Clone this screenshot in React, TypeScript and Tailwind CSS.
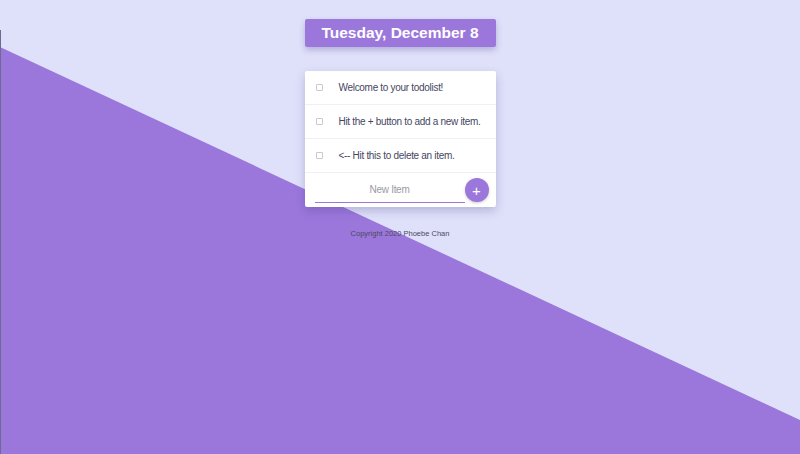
import { useState } from 'react';

const items = [
    'Welcome to your todolist!',
    'Hit the + button to add a new item.',
    '<-- Hit this to delete an item.',
];

export default function App() {
    const [newItem, setNewItem] = useState('');

    return (
        <div className="relative min-h-screen overflow-hidden bg-[#dfe1fa] font-['Liberation_Sans',Arial,sans-serif]">
            {/* diagonal backdrop */}
            <div className="absolute inset-0 bg-[#9b77dc] [clip-path:polygon(0_47px,100%_420px,100%_100%,0_100%)]" />
            <div className="absolute left-0 top-[30px] bottom-0 w-px bg-[#6f6a8f]" />

            <div className="relative flex flex-col items-center pt-[19px]">
                {/* Heading */}
                <div className="w-[191px] h-[28px] flex items-center justify-center bg-[#9b77dc] rounded-[2px] shadow-[0_3px_6px_rgba(80,60,140,0.3)]">
                    <h1 className="text-white text-[15.5px] font-bold">Tuesday, December 8</h1>
                </div>

                {/* List */}
                <div className="mt-[24px] w-[191px] bg-white rounded-[2px] shadow-[0_4px_10px_rgba(60,50,120,0.25)]">
                    {items.map((text) => (
                        <div key={text} className="h-[34px] flex items-center border-b border-[#f0f0f3]">
                            <input type="checkbox" className="shrink-0 ml-[11px] w-[7px] h-[7px] appearance-none border border-[#c9c9cf] rounded-[1px] bg-white" />
                            <p className="ml-[16px] whitespace-nowrap text-[10px] tracking-[-0.3px] text-[#45475f]">{text}</p>
                        </div>
                    ))}
                    <form className="h-[34px] flex items-start" onSubmit={(e) => e.preventDefault()}>
                        <input
                            type="text"
                            value={newItem}
                            onChange={(e) => setNewItem(e.target.value)}
                            placeholder="New Item"
                            className="ml-[10px] mt-[4px] w-[150px] h-[26px] text-center text-[10px] tracking-[-0.3px] text-[#45475f] placeholder:text-[#9a9aa4] outline-none border-b-[1.5px] border-[#9b77dc] bg-transparent"
                        />
                        <button
                            type="submit"
                            className="mt-[5px] w-[24px] h-[24px] rounded-full bg-[#9b77dc] text-white text-[15px] leading-none flex items-center justify-center shadow-[0_1px_3px_rgba(0,0,0,0.2)]"
                        >
                            +
                        </button>
                    </form>
                </div>

                <footer className="mt-[21px] text-[7.5px] text-[#4d4860]">Copyright 2020 Phoebe Chan</footer>
            </div>
        </div>
    );
}
